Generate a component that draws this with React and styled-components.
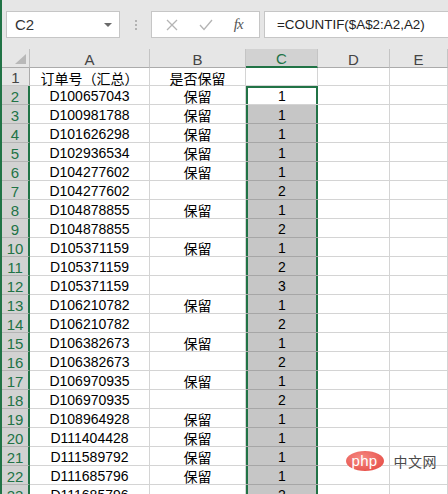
import React from 'react';
import styled, { createGlobalStyle } from 'styled-components';

const GlobalStyle = createGlobalStyle`
  html, body {
    margin: 0;
    padding: 0;
    background: #ffffff;
  }
  body {
    font-family: "Liberation Sans", "Noto Sans CJK SC", sans-serif;
  }
`;

const GREEN = '#217346';
const CJK = '"Liberation Sans", "Noto Sans CJK SC", sans-serif';

const Window = styled.div`
  position: relative;
  width: 448px;
  height: 494px;
  overflow: hidden;
  box-sizing: border-box;
  border-left: 2px solid ${GREEN};
  display: flex;
  flex-direction: column;
  background: #fff;
`;

const FormulaBar = styled.div`
  height: 49px;
  flex: none;
  box-sizing: border-box;
  background: #e6e6e6;
  display: flex;
  align-items: flex-start;
  padding: 11px 0 0 4px;
`;

const Box = styled.div`
  height: 27px;
  box-sizing: border-box;
  background: #fff;
  border: 1px solid #c6c6c6;
  display: flex;
  align-items: center;
`;

const NameBox = styled(Box)`
  width: 114px;
  justify-content: space-between;
  padding: 0 7px 0 8px;
  font-size: 15px;
  color: #333;
`;

const DropArrow = styled.span`
  width: 0;
  height: 0;
  border-left: 4px solid transparent;
  border-right: 4px solid transparent;
  border-top: 4px solid #6a6a6a;
`;

const Grip = styled.div`
  width: 31px;
  height: 27px;
  display: flex;
  flex-direction: column;
  align-items: center;
  justify-content: center;
  gap: 2px;
  span {
    width: 2px;
    height: 2px;
    background: #b3b3b3;
  }
`;

const ButtonBox = styled(Box)`
  width: 109px;
  justify-content: space-around;
  padding: 0 6px 0 4px;
`;

const Fx = styled.span`
  font-family: "Liberation Serif", serif;
  font-style: italic;
  font-size: 15px;
  color: #555;
  letter-spacing: -1px;
`;

const FormulaInput = styled(Box)`
  flex: 1;
  margin-left: 4px;
  margin-right: -2px;
  padding-left: 12px;
  font-size: 13.4px;
  color: #222;
`;

const Sheet = styled.div`
  display: grid;
  grid-template-columns: 28px 120px 96px 72px 72px 1fr;
  grid-template-rows: 19px 18px;
  grid-auto-rows: 19px;
`;

const Corner = styled.div`
  background: #e6e6e6;
  box-sizing: border-box;
  border-right: 1px solid #bfbfbf;
  border-bottom: 1px solid #ababab;
  display: flex;
  align-items: flex-end;
  justify-content: flex-end;
  padding: 0 3px 3px 0;
`;

const Triangle = styled.span`
  width: 11px;
  height: 10px;
  background: #b8b8b8;
  clip-path: polygon(100% 0, 100% 100%, 0 100%);
`;

const ColHeader = styled.div`
  box-sizing: border-box;
  background: ${p => (p.$active ? '#d2d2d2' : '#e6e6e6')};
  border-right: 1px solid #c4c4c4;
  border-bottom: ${p => (p.$active ? `2px solid ${GREEN}` : '1px solid #ababab')};
  color: ${p => (p.$active ? GREEN : '#444')};
  font-size: 15px;
  display: flex;
  align-items: center;
  justify-content: center;
  padding-top: 2px;
`;

const RowHeader = styled.div`
  box-sizing: border-box;
  background: ${p => (p.$active ? '#d2d2d2' : '#e6e6e6')};
  border-bottom: 1px solid ${p => (p.$active ? '#b4b4b4' : '#c8c8c8')};
  border-right: ${p => (p.$active ? `2px solid ${GREEN}` : '1px solid #ababab')};
  color: ${p => (p.$active ? GREEN : '#444')};
  font-size: 15px;
  display: flex;
  align-items: center;
  justify-content: center;
  padding-top: 2px;
`;

const Cell = styled.div`
  box-sizing: border-box;
  border-right: 1px solid #d4d4d4;
  border-bottom: 1px solid #d4d4d4;
  font-family: ${CJK};
  font-size: 14px;
  color: #000;
  display: flex;
  align-items: center;
  justify-content: center;
  padding-top: 2px;
  white-space: nowrap;
`;

const SelCell = styled(Cell)`
  background: ${p => (p.$current ? '#fff' : '#c6c6c6')};
  border-bottom-color: ${p => (p.$current ? '#d4d4d4' : '#a6a6a6')};
  border-right: none;
  box-shadow: inset 2px 0 ${GREEN}, inset -2px 0 ${GREEN}
    ${p => (p.$current ? `, inset 0 2px ${GREEN}` : '')};
`;

const Watermark = styled.div`
  position: absolute;
  right: 11px;
  bottom: 23px;
  display: flex;
  align-items: center;
  gap: 10px;
`;

const PhpLogo = styled.span`
  width: 38px;
  height: 20px;
  border-radius: 50%;
  background: radial-gradient(ellipse at 40% 35%, #f58a84 0%, #e8544d 75%);
  color: #fff;
  font-family: "Liberation Sans", sans-serif;
  font-size: 15px;
  line-height: 19px;
  text-align: center;
  letter-spacing: 0.3px;
`;

const SiteName = styled.span`
  font-family: "Noto Sans CJK SC", sans-serif;
  font-size: 14px;
  color: #4a4a4a;
  letter-spacing: 0.5px;
`;

const rows = [
  ['D100657043', '保留', 1],
  ['D100981788', '保留', 1],
  ['D101626298', '保留', 1],
  ['D102936534', '保留', 1],
  ['D104277602', '保留', 1],
  ['D104277602', '', 2],
  ['D104878855', '保留', 1],
  ['D104878855', '', 2],
  ['D105371159', '保留', 1],
  ['D105371159', '', 2],
  ['D105371159', '', 3],
  ['D106210782', '保留', 1],
  ['D106210782', '', 2],
  ['D106382673', '保留', 1],
  ['D106382673', '', 2],
  ['D106970935', '保留', 1],
  ['D106970935', '', 2],
  ['D108964928', '保留', 1],
  ['D111404428', '保留', 1],
  ['D111589792', '保留', 1],
  ['D111685796', '保留', 1],
  ['D111685796', '', 2],
];

function CrossIcon() {
  return (
    <svg width="12" height="12" viewBox="0 0 12 12">
      <path d="M1 1 L11 11 M11 1 L1 11" stroke="#b4b4b4" strokeWidth="1.3" fill="none" />
    </svg>
  );
}

function CheckIcon() {
  return (
    <svg width="14" height="12" viewBox="0 0 14 12">
      <path d="M1 6 L5 10.5 L13 1" stroke="#b4b4b4" strokeWidth="1.3" fill="none" />
    </svg>
  );
}

export default function App() {
  return (
    <Window>
      <GlobalStyle />
      <FormulaBar>
        <NameBox>
          C2
          <DropArrow />
        </NameBox>
        <Grip>
          <span />
          <span />
          <span />
        </Grip>
        <ButtonBox>
          <CrossIcon />
          <CheckIcon />
          <Fx>fx</Fx>
        </ButtonBox>
        <FormulaInput>=COUNTIF($A$2:A2,A2)</FormulaInput>
      </FormulaBar>

      <Sheet>
        <Corner>
          <Triangle />
        </Corner>
        <ColHeader>A</ColHeader>
        <ColHeader>B</ColHeader>
        <ColHeader $active>C</ColHeader>
        <ColHeader>D</ColHeader>
        <ColHeader>E</ColHeader>

        <RowHeader>1</RowHeader>
        <Cell>订单号（汇总）</Cell>
        <Cell>是否保留</Cell>
        <Cell />
        <Cell />
        <Cell />

        {rows.map(([id, keep, count], i) => (
          <React.Fragment key={i}>
            <RowHeader $active>{i + 2}</RowHeader>
            <Cell>{id}</Cell>
            <Cell>{keep}</Cell>
            <SelCell $current={i === 0}>{count}</SelCell>
            <Cell />
            <Cell />
          </React.Fragment>
        ))}
      </Sheet>

      <Watermark>
        <PhpLogo>php</PhpLogo>
        <SiteName>中文网</SiteName>
      </Watermark>
    </Window>
  );
}
